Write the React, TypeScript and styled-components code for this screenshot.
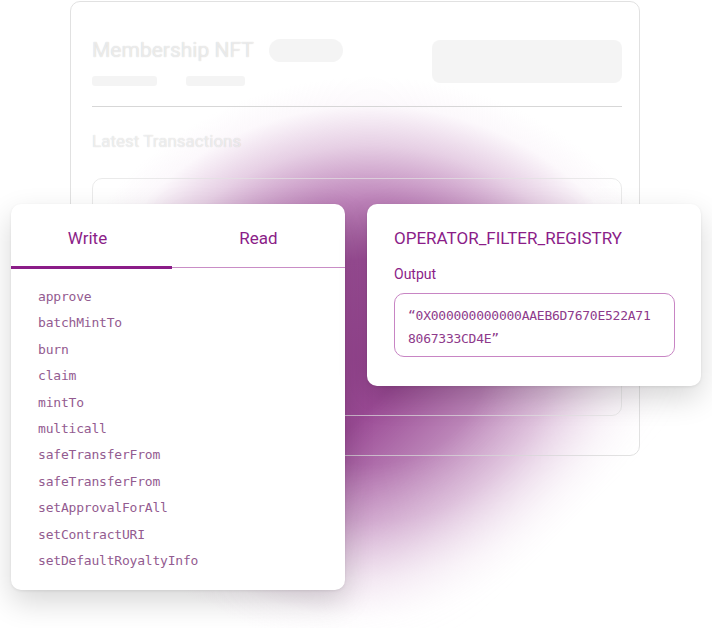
import styled, { createGlobalStyle } from "styled-components";

const GlobalStyle = createGlobalStyle`
  html, body {
    margin: 0;
    padding: 0;
    background: #ffffff;
  }
  body {
    font-family: Roboto, "Liberation Sans", sans-serif;
  }
`;

const Stage = styled.div`
  position: relative;
  display: grid;
  width: 712px;
  height: 628px;
  overflow: hidden;
  background: #ffffff;

  & > * {
    grid-area: 1 / 1;
  }
`;

// decorative purple glow behind the cards, cut off diagonally toward the lower right
const Glow = styled.div`
  position: absolute;
  inset: 0;
  background: radial-gradient(
    ellipse 320px 285px at 370px 362px,
    #984692 0%,
    #9d4e98 36%,
    rgba(168, 92, 163, 0.78) 56%,
    rgba(190, 130, 185, 0.38) 76%,
    rgba(230, 200, 228, 0.12) 90%,
    rgba(255, 255, 255, 0) 100%
  );
  mask-image: linear-gradient(135deg, #000 58%, rgba(0, 0, 0, 0.5) 71%, transparent 82%);
  -webkit-mask-image: linear-gradient(135deg, #000 58%, rgba(0, 0, 0, 0.5) 71%, transparent 82%);
`;

const BackCard = styled.div`
  position: relative;
  margin: 1px 0 0 70px;
  width: 570px;
  height: 455px;
  box-sizing: border-box;
  border: 1px solid rgba(215, 215, 215, 0.75);
  border-radius: 10px;
  padding: 34px 17px 0 21px;
  display: flex;
  flex-direction: column;
`;

const BackHeader = styled.div`
  display: flex;
  justify-content: space-between;
  align-items: flex-start;
`;

const BackTitleRow = styled.div`
  display: flex;
  align-items: center;
  gap: 15px;
`;

const BackTitle = styled.span`
  font-size: 21px;
  line-height: 28px;
  color: rgba(255, 255, 255, 0.6);
  text-shadow: 0 0 1px rgba(0, 0, 0, 0.22);
`;

const Skeleton = styled.div<{ $w: number; $h: number; $r?: number }>`
  width: ${(p) => p.$w}px;
  height: ${(p) => p.$h}px;
  border-radius: ${(p) => p.$r ?? 4}px;
  background: rgba(240, 240, 240, 0.7);
`;

const BarsRow = styled.div`
  display: flex;
  gap: 29px;
  margin-top: 12px;
`;

const BigBox = styled(Skeleton)`
  margin-top: 4px;
`;

const Divider = styled.div`
  height: 1px;
  margin-top: 20px;
  background: rgba(205, 205, 205, 0.8);
`;

const BackSubtitle = styled.span`
  margin-top: 22px;
  font-size: 17px;
  line-height: 24px;
  color: rgba(255, 255, 255, 0.6);
  text-shadow: 0 0 1px rgba(0, 0, 0, 0.2);
`;

const InnerCard = styled.div`
  margin-top: 25px;
  height: 236px;
  border: 1px solid rgba(225, 225, 225, 0.7);
  border-radius: 10px;
`;

const FrontRow = styled.div`
  position: relative;
  display: flex;
  align-items: flex-start;
  gap: 22px;
  padding: 204px 0 0 11px;
`;

const Card = styled.div<{ $h?: number }>`
  width: 334px;
  ${(p) => (p.$h ? `height: ${p.$h}px;` : "")}
  box-sizing: border-box;
  background: #ffffff;
  border-radius: 10px;
  box-shadow: 0 12px 30px rgba(0, 0, 0, 0.16), 0 1px 3px rgba(0, 0, 0, 0.08);
`;

const Tabs = styled.div`
  display: grid;
  grid-template-columns: 161px 1fr;
  border-bottom: 1px solid #c98dc6;
`;

const Tab = styled.div<{ $active?: boolean }>`
  height: 65px;
  box-sizing: border-box;
  padding-top: 6px;
  display: flex;
  align-items: center;
  justify-content: center;
  font-size: 17px;
  color: #8b1d88;
  border-bottom: 3px solid ${(p) => (p.$active ? "#8b1d88" : "transparent")};
  margin-bottom: -2px;
`;

const WriteLabel = styled.span`
  margin-right: 8px;
`;

const FnList = styled.ul`
  list-style: none;
  margin: 0;
  padding: 16px 0 16px 27px;
`;

const FnItem = styled.li`
  height: 26.4px;
  line-height: 26.4px;
  font-family: "DejaVu Sans Mono", "Liberation Mono", monospace;
  font-size: 13px;
  letter-spacing: -0.2px;
  color: #935b90;
`;

const OutputBody = styled.div`
  padding: 24px 27px 0 27px;
  display: flex;
  flex-direction: column;
`;

const OutputTitle = styled.span`
  font-size: 17px;
  line-height: 20px;
  color: #8b1d88;
`;

const OutputLabel = styled.span`
  margin-top: 17px;
  font-size: 14px;
  line-height: 18px;
  color: #8b1d88;
`;

const OutputBox = styled.div`
  margin-top: 10px;
  width: 281px;
  height: 64px;
  box-sizing: border-box;
  border: 1px solid #c885c4;
  border-radius: 10px;
  padding: 11px 20px 0 13px;
  font-family: "DejaVu Sans Mono", "Liberation Mono", monospace;
  font-size: 13px;
  letter-spacing: -0.25px;
  line-height: 22.5px;
  color: #8e3a8b;
  word-break: break-all;
`;

const functions = [
  "approve",
  "batchMintTo",
  "burn",
  "claim",
  "mintTo",
  "multicall",
  "safeTransferFrom",
  "safeTransferFrom",
  "setApprovalForAll",
  "setContractURI",
  "setDefaultRoyaltyInfo",
];

export default function App() {
  return (
    <>
      <GlobalStyle />
      <Stage>
        <Glow />
        <BackCard>
          <BackHeader>
            <div>
              <BackTitleRow>
                <BackTitle>Membership NFT</BackTitle>
                <Skeleton $w={74} $h={23} $r={12} />
              </BackTitleRow>
              <BarsRow>
                <Skeleton $w={65} $h={10} $r={3} />
                <Skeleton $w={59} $h={10} $r={3} />
              </BarsRow>
            </div>
            <BigBox $w={190} $h={43} $r={8} />
          </BackHeader>
          <Divider />
          <BackSubtitle>Latest Transactions</BackSubtitle>
          <InnerCard />
        </BackCard>
        <FrontRow>
          <Card>
            <Tabs>
              <Tab $active>
                <WriteLabel>Write</WriteLabel>
              </Tab>
              <Tab>Read</Tab>
            </Tabs>
            <FnList>
              {functions.map((name, i) => (
                <FnItem key={i}>{name}</FnItem>
              ))}
            </FnList>
          </Card>
          <Card $h={182}>
            <OutputBody>
              <OutputTitle>OPERATOR_FILTER_REGISTRY</OutputTitle>
              <OutputLabel>Output</OutputLabel>
              <OutputBox>“0X000000000000AAEB6D7670E522A718067333CD4E”</OutputBox>
            </OutputBody>
          </Card>
        </FrontRow>
      </Stage>
    </>
  );
}
